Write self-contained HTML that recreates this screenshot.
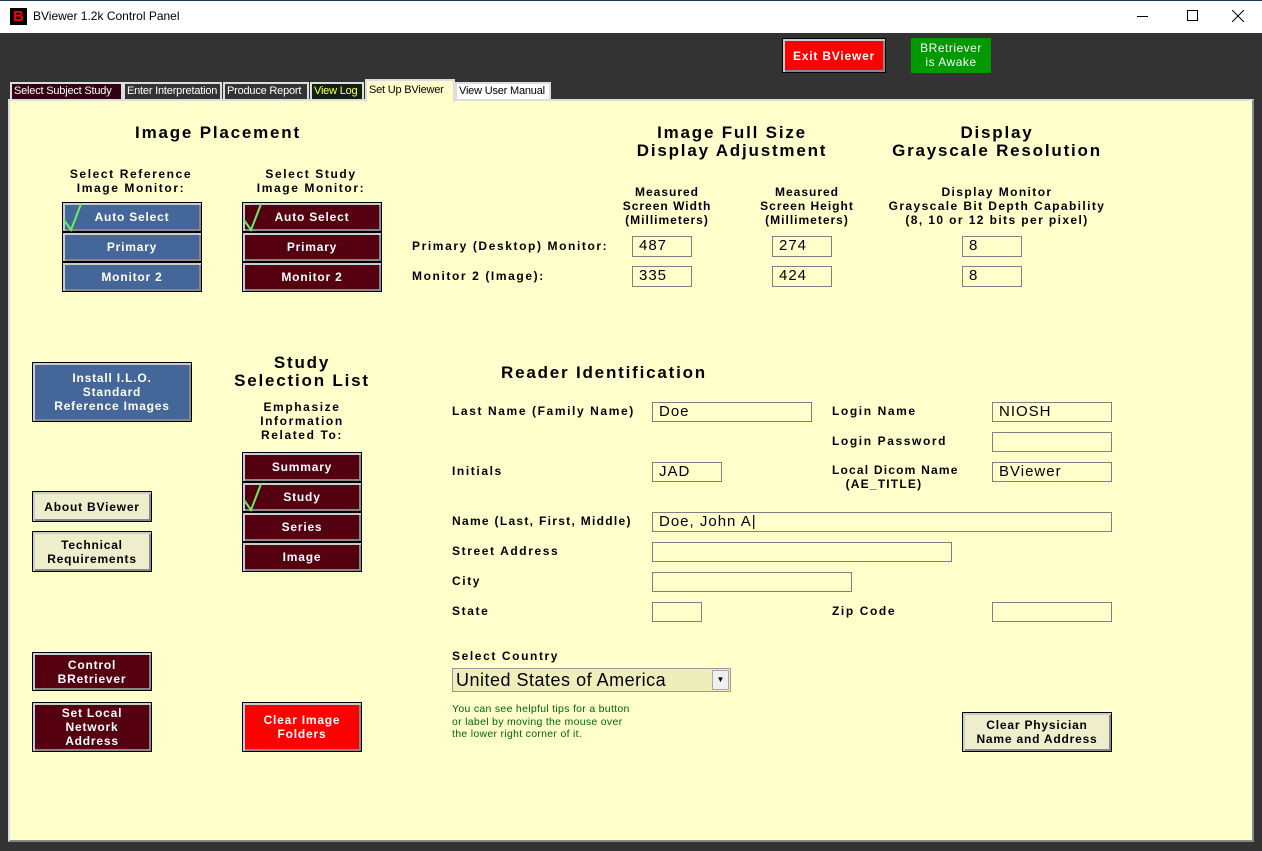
<!DOCTYPE html>
<html><head><meta charset="utf-8"><style>
*{margin:0;padding:0;box-sizing:border-box}
body{width:1262px;height:851px;background:#333;position:relative;overflow:hidden;font-family:"Liberation Sans",Arial,sans-serif}
.a{position:absolute}
.t{position:absolute;font-weight:bold;font-size:12px;color:#000;letter-spacing:1.6px;white-space:nowrap}
.c{text-align:center}
.h{position:absolute;font-weight:bold;font-size:17px;letter-spacing:1.8px;text-align:center;line-height:18px;white-space:nowrap}
.b{position:absolute;border:1px solid #000;box-shadow:inset 2px 2px 0 #ccc,inset -2px -2px 0 #888;color:#fff;font-weight:bold;font-size:12px;letter-spacing:0.8px;display:flex;align-items:center;justify-content:center;text-align:center;line-height:14px}
.bl{background:#446699}.mr{background:#550011}.rd{background:#ff0000}.bg{background:#eeeecc;color:#000}
.i{position:absolute;border:1px solid #808080;font-size:15px;letter-spacing:1px;padding-left:6px;line-height:18px}
.tab{position:absolute;top:82px;height:18px;font-size:11px;color:#fff;border:2px solid #ddd;border-bottom:none;padding:0 2px;line-height:15px;white-space:nowrap;overflow:hidden;letter-spacing:-0.2px}
</style></head><body>
<div class="a" style="left:0;top:0;width:1262px;height:33px;background:#fff;border-top:1px solid #1f3a56"></div>
<div class="a" style="left:10px;top:8px;width:17px;height:17px;background:#000;color:#f00;font-weight:bold;font-size:15px;text-align:center;line-height:17px">B</div>
<div class="a" style="left:33px;top:9px;font-size:12px;color:#000">BViewer 1.2k Control Panel</div>
<div class="a" style="left:1137px;top:16px;width:11px;height:1px;background:#000"></div>
<div class="a" style="left:1187px;top:10px;width:11px;height:11px;border:1px solid #000"></div>
<svg class="a" style="left:1232px;top:10px" width="12" height="12"><path d="M0 0 L12 12 M12 0 L0 12" stroke="#000" stroke-width="1"/></svg>

<div class="b rd" style="left:782px;top:38px;width:104px;height:35px">Exit BViewer</div>
<div class="a" style="left:911px;top:38px;width:80px;height:35px;background:#009900;color:#fff;font-size:12px;text-align:center;line-height:14px;padding-top:3px;letter-spacing:0.5px">BRetriever<br>is Awake</div>

<div class="tab" style="left:10px;width:113px;background:#330011">Select Subject Study</div>
<div class="tab" style="left:123px;width:99px;background:#333">Enter Interpretation</div>
<div class="tab" style="left:223px;width:86px;background:#333">Produce Report</div>
<div class="tab" style="left:310px;width:54px;background:#112211;color:#ffff66">View Log</div>
<div class="tab" style="left:455px;width:96px;background:#fff;color:#000">View User Manual</div>

<div class="a" style="left:8px;top:99px;width:1246px;height:743px;border:2px solid #ddd;border-right-color:#888;border-bottom-color:#888;background:#ffffcc"></div>
<div class="tab" style="left:365px;top:79px;height:23px;width:90px;background:#ffffcc;color:#000;border-color:#ddd;line-height:18px">Set Up BViewer</div>

<div class="h" style="left:118px;top:124px;width:200px">Image Placement</div>
<div class="h" style="left:592px;top:124px;width:280px">Image Full Size<br>Display Adjustment</div>
<div class="h" style="left:857px;top:124px;width:280px">Display<br>Grayscale Resolution</div>

<div class="t c" style="left:41px;top:167px;width:180px;line-height:14px">Select Reference<br>Image Monitor:</div>
<div class="t c" style="left:221px;top:167px;width:180px;line-height:14px">Select Study<br>Image Monitor:</div>

<div class="b bl" style="left:62px;top:202px;width:140px;height:30px">Auto Select</div>
<div class="b bl" style="left:62px;top:232px;width:140px;height:30px">Primary</div>
<div class="b bl" style="left:62px;top:262px;width:140px;height:30px">Monitor 2</div>
<div class="b mr" style="left:242px;top:202px;width:140px;height:30px">Auto Select</div>
<div class="b mr" style="left:242px;top:232px;width:140px;height:30px">Primary</div>
<div class="b mr" style="left:242px;top:262px;width:140px;height:30px">Monitor 2</div>
<svg class="a" style="left:62px;top:200px" width="30" height="32"><path d="M2 20 L9 30 L19 4" stroke="#66ee66" stroke-width="2" fill="none"/></svg>
<svg class="a" style="left:242px;top:200px" width="30" height="32"><path d="M2 20 L9 30 L19 4" stroke="#66ee66" stroke-width="2" fill="none"/></svg>

<div class="t c" style="left:597px;top:185px;width:140px;line-height:14px;letter-spacing:1px">Measured<br>Screen Width<br>(Millimeters)</div>
<div class="t c" style="left:737px;top:185px;width:140px;line-height:14px;letter-spacing:1px">Measured<br>Screen Height<br>(Millimeters)</div>
<div class="t c" style="left:857px;top:185px;width:280px;line-height:14px;letter-spacing:1.4px">Display Monitor<br>Grayscale Bit Depth Capability<br>(8, 10 or 12 bits per pixel)</div>
<div class="t" style="left:412px;top:239px">Primary (Desktop) Monitor:</div>
<div class="t" style="left:412px;top:269px">Monitor 2 (Image):</div>
<div class="i" style="left:632px;top:236px;width:60px;height:21px">487</div>
<div class="i" style="left:772px;top:236px;width:60px;height:21px">274</div>
<div class="i" style="left:962px;top:236px;width:60px;height:21px">8</div>
<div class="i" style="left:632px;top:266px;width:60px;height:21px">335</div>
<div class="i" style="left:772px;top:266px;width:60px;height:21px">424</div>
<div class="i" style="left:962px;top:266px;width:60px;height:21px">8</div>

<div class="b bl" style="left:32px;top:362px;width:160px;height:60px">Install I.L.O.<br>Standard<br>Reference Images</div>
<div class="h" style="left:202px;top:354px;width:200px">Study<br>Selection List</div>
<div class="t c" style="left:212px;top:400px;width:180px;line-height:14px">Emphasize<br>Information<br>Related To:</div>
<div class="b mr" style="left:242px;top:452px;width:120px;height:30px">Summary</div>
<div class="b mr" style="left:242px;top:482px;width:120px;height:30px">Study</div>
<div class="b mr" style="left:242px;top:512px;width:120px;height:30px">Series</div>
<div class="b mr" style="left:242px;top:542px;width:120px;height:30px">Image</div>
<svg class="a" style="left:242px;top:480px" width="30" height="32"><path d="M2 20 L9 30 L19 4" stroke="#66ee66" stroke-width="2" fill="none"/></svg>
<div class="b bg" style="left:32px;top:491px;width:120px;height:31px">About BViewer</div>
<div class="b bg" style="left:32px;top:531px;width:120px;height:41px">Technical<br>Requirements</div>
<div class="b mr" style="left:32px;top:652px;width:120px;height:39px">Control<br>BRetriever</div>
<div class="b mr" style="left:32px;top:702px;width:120px;height:50px">Set Local<br>Network<br>Address</div>
<div class="b rd" style="left:242px;top:702px;width:120px;height:50px">Clear Image<br>Folders</div>

<div class="h" style="left:464px;top:364px;width:280px">Reader Identification</div>
<div class="t" style="left:452px;top:404px">Last Name (Family Name)</div>
<div class="t" style="left:452px;top:464px">Initials</div>
<div class="t" style="left:452px;top:514px;letter-spacing:1.3px">Name (Last, First, Middle)</div>
<div class="t" style="left:452px;top:544px">Street Address</div>
<div class="t" style="left:452px;top:574px">City</div>
<div class="t" style="left:452px;top:604px">State</div>
<div class="t" style="left:832px;top:404px">Login Name</div>
<div class="t" style="left:832px;top:434px">Login Password</div>
<div class="t" style="left:832px;top:463px;line-height:14px;letter-spacing:1.2px">Local Dicom Name<br>&nbsp;&nbsp;&nbsp;(AE_TITLE)</div>
<div class="t" style="left:832px;top:604px">Zip Code</div>
<div class="i" style="left:652px;top:402px;width:160px;height:20px">Doe</div>
<div class="i" style="left:652px;top:462px;width:70px;height:20px">JAD</div>
<div class="i" style="left:652px;top:512px;width:460px;height:20px">Doe, John A|</div>
<div class="i" style="left:652px;top:542px;width:300px;height:20px"></div>
<div class="i" style="left:652px;top:572px;width:200px;height:20px"></div>
<div class="i" style="left:652px;top:602px;width:50px;height:20px"></div>
<div class="i" style="left:992px;top:402px;width:120px;height:20px">NIOSH</div>
<div class="i" style="left:992px;top:432px;width:120px;height:20px"></div>
<div class="i" style="left:992px;top:462px;width:120px;height:20px">BViewer</div>
<div class="i" style="left:992px;top:602px;width:120px;height:20px"></div>

<div class="t" style="left:452px;top:649px">Select Country</div>
<div class="a" style="left:452px;top:668px;width:279px;height:24px;background:#eeeebb;border:1px solid #999;font-size:18px;line-height:22px;padding-left:3px;letter-spacing:0.5px">United States of America</div>
<div class="a" style="left:712px;top:670px;width:17px;height:20px;background:#f0f0f0;border:1px solid #aaa;font-size:8px;text-align:center;line-height:18px">▼</div>
<div class="a" style="left:452px;top:703px;font-size:10.5px;color:#006600;line-height:12.5px;letter-spacing:0.3px">You can see helpful tips for a button<br>or label by moving the mouse over<br>the lower right corner of it.</div>
<div class="b bg" style="left:962px;top:712px;width:150px;height:40px">Clear Physician<br>Name and Address</div>
</body></html>
